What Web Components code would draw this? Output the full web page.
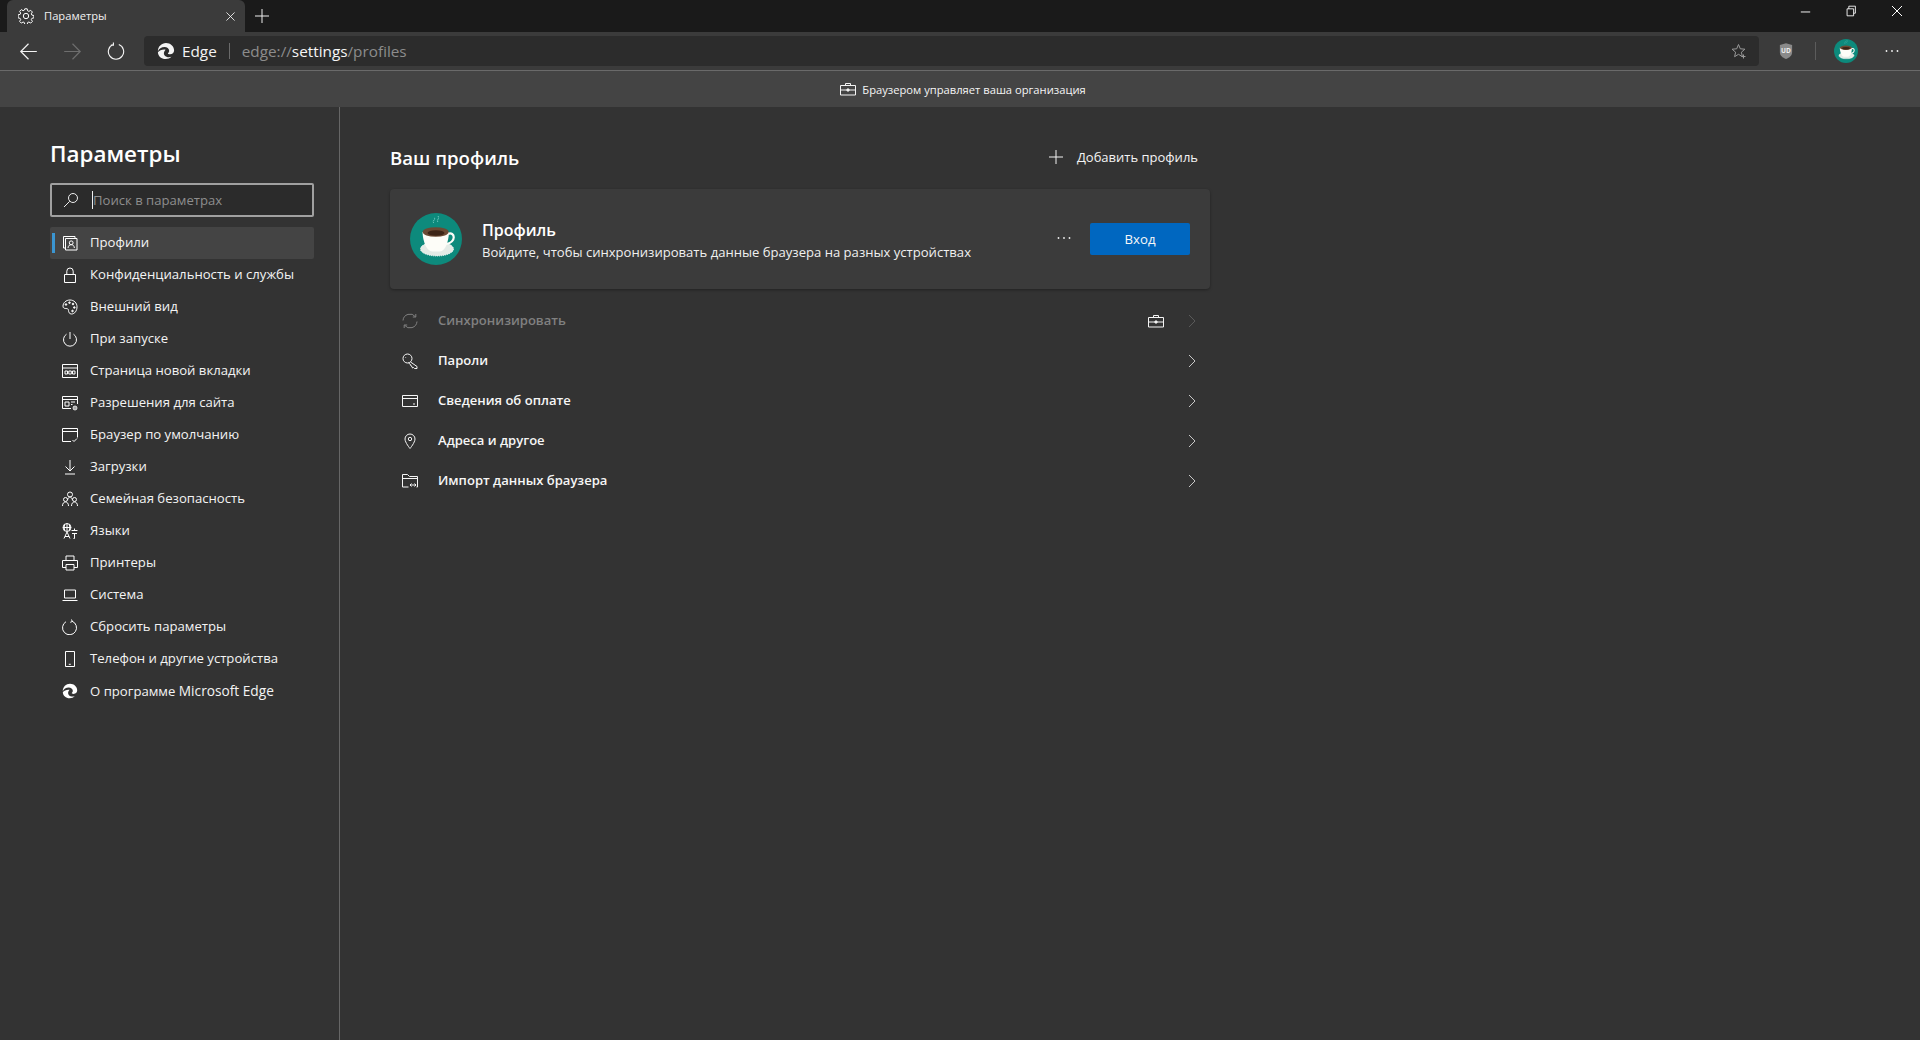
<!DOCTYPE html>
<html lang="ru"><head><meta charset="utf-8"><title>Параметры</title>
<style>
html,body{margin:0;height:100%;background:#333;overflow:hidden}
body{font-family:"Open Sans","Noto Sans","Liberation Sans",sans-serif;color:#f0f0f0;display:flex;flex-direction:column;height:1040px}
.latin{font-size:13.700px}
</style></head><body>
<browser-tabstrip></browser-tabstrip>
<browser-toolbar></browser-toolbar>
<managed-bar>Браузером управляет ваша организация</managed-bar>
<settings-page>
  <settings-sidebar slot="side">
    <nav-item icon="profiles" selected>Профили</nav-item>
    <nav-item icon="lock">Конфиденциальность и службы</nav-item>
    <nav-item icon="palette">Внешний вид</nav-item>
    <nav-item icon="power">При запуске</nav-item>
    <nav-item icon="newtab">Страница новой вкладки</nav-item>
    <nav-item icon="siteperm">Разрешения для сайта</nav-item>
    <nav-item icon="defbrowser">Браузер по умолчанию</nav-item>
    <nav-item icon="download">Загрузки</nav-item>
    <nav-item icon="family">Семейная безопасность</nav-item>
    <nav-item icon="lang">Языки</nav-item>
    <nav-item icon="printer">Принтеры</nav-item>
    <nav-item icon="laptop">Система</nav-item>
    <nav-item icon="reset">Сбросить параметры</nav-item>
    <nav-item icon="phone">Телефон и другие устройства</nav-item>
    <nav-item icon="edge">О программе <span class="latin">Microsoft Edge</span></nav-item>
  </settings-sidebar>
  <profile-main slot="main">
    <profile-row icon="sync" disabled managed>Синхронизировать</profile-row>
    <profile-row icon="key">Пароли</profile-row>
    <profile-row icon="card">Сведения об оплате</profile-row>
    <profile-row icon="pin">Адреса и другое</profile-row>
    <profile-row icon="import">Импорт данных браузера</profile-row>
  </profile-main>
</settings-page>
<script>
const ICONS={
gear:'<circle cx="8" cy="8" r="2.700"/><path d="M6.800 .8h2.400l.4 2 1.300.6 1.800-1.100 1.700 1.700-1.100 1.800.6 1.300 2 .4v2.400l-2 .4-.6 1.300 1.100 1.800-1.700 1.700-1.800-1.100-1.300.6-.4 2H6.800l-.4-2-1.300-.6-1.800 1.100-1.700-1.700 1.100-1.800-.6-1.300-2-.4V6.800l2-.4.6-1.300-1.100-1.800 1.700-1.700 1.800 1.100 1.300-.6z"/>',
x:'<path d="M3 3l10 10M13 3L3 13"/>',
plus:'<path d="M8 1v14M1 8h14"/>',
back:'<path d="M15 8H1.500M8 1.500L1.500 8 8 14.500"/>',
forward:'<path d="M1 8h13.500M8 1.500L14.500 8 8 14.500"/>',
refresh:'<path d="M10.500 2.200A6.800 6.800 0 1 1 5.500 2.200M5.700 .5v2.300H3.400"/>',
star:'<path d="M7.500 1.500l1.800 4.300 4.600.4-3.500 3 1 4.500-3.900-2.400-3.900 2.400 1-4.500-3.500-3 4.600-.4z"/><path d="M12.500 11.500v4M10.500 13.500h4" />',
min:'<path d="M3 8.500h10"/>',
restore:'<path d="M3.500 5.500h7.500v8H3.500zM5.500 5.500V2.500H13v8h-2"/>',
dots:'<circle cx="2.500" cy="8" r=".9" fill="currentColor" stroke="none"/><circle cx="8" cy="8" r=".9" fill="currentColor" stroke="none"/><circle cx="13.500" cy="8" r=".9" fill="currentColor" stroke="none"/>',
brief:'<path d="M.5 4.500h15v9.500H.5zM5.500 4.500V2.500h5v2M.5 9h15"/><path d="M7 8h2v2H7z" fill="currentColor"/>',
search:'<circle cx="10" cy="6" r="4.500"/><path d="M6.700 9.300L1 15"/>',
profiles:'<path d="M3.500 3.500h11.500v11.500H3.500z"/><path d="M3.500 13H1.500V1.500H13v2"/><circle cx="9.200" cy="7.800" r="1.900"/><path d="M6 13c.3-2.400 1.500-3.300 3.200-3.300s2.900.9 3.200 3.300"/>',
lock:'<path d="M2.500 7.500h11v8h-11zM4.800 7.500V4.200a3.200 3.200 0 0 1 6.400 0v3.300"/>',
palette:'<path d="M8 1C4 1 1 3.800 1 7.200c0 1.800 1.300 2.300 2.800 2.300 1.500 0 2.700.3 2.700 2 0 1.500.8 3.500 3 3.500 3.300 0 5.500-3.400 5.500-7.200C15 4 12 1 8 1z"/><circle cx="4" cy="5.500" r=".8" fill="currentColor"/><circle cx="7.500" cy="3.700" r=".8" fill="currentColor"/><circle cx="11" cy="5" r=".8" fill="currentColor"/><circle cx="12.300" cy="8.500" r=".8" fill="currentColor"/><circle cx="10.500" cy="12" r=".8" fill="currentColor"/>',
power:'<path d="M8 1v7M4.500 3.200a6.500 6.500 0 1 0 7 0"/>',
newtab:'<path d="M.5 1.500h15v13H.5zM.5 5h15"/><path d="M3 8h2.500v3H3zM6.800 8h2.500v3H6.800zM10.500 8H13v3h-2.500z"/>',
siteperm:'<path d="M9 13.500H.5v-12h15V9M.5 4.500h15M3 7h4v4H3zM9 7h4M9 9.500h1.500"/><circle cx="13" cy="13" r="1.300"/><path d="M13 10.500v1M13 14.500v1M10.500 13h1M14.500 13h1M11.300 11.300l.7.7M14 14l.7.7M14.700 11.300l-.7.7M12 14l-.7.7"/>',
defbrowser:'<path d="M9 14.500H.5v-13h15v9M.5 4.500h15M10.500 13l1.500 1.500 3-3"/>',
download:'<path d="M8 1v10.500M3.500 7.500L8 12l4.500-4.500M3 15h10"/>',
family:'<circle cx="8" cy="3.500" r="2.500"/><circle cx="3.500" cy="8.500" r="2"/><circle cx="12.500" cy="8.500" r="2"/><path d="M.5 15c0-2.500 1.200-4 3-4s3 1.500 3 4M9.500 15c0-2.500 1.200-4 3-4s3 1.500 3 4M5.500 9c.5-2 1.500-3 2.500-3s2 1 2.500 3"/>',
lang:'<circle cx="5" cy="4.500" r="4"/><path d="M1 4.500h8M5 .5v8M2.800 1.500c-.8 2-.8 4 0 6M7.200 1.500c.8 2 .8 4 0 6M2 15.500l3-6.500 3 6.500M3 13.500h4M9.500 7.500h6M12.500 5.500v2M10 10.500h5M12.500 10.500v5h-1"/>',
printer:'<path d="M4 5.500V1h8v4.500M4 12.500H.5v-7h15v7H12M4 9.500h8V15H4z"/>',
laptop:'<path d="M2.500 3h11v8h-11zM.5 13.500h15"/>',
reset:'<path d="M10 2.200A7 7 0 1 1 4 2.700M9.500 .5l.8 2-2 .8"/>',
phone:'<path d="M3.500 .5h9v15h-9z"/><path d="M6.800 13.300h2" />',
sync:'<path d="M1 7.500a7 7 0 0 1 12.500-3.700M15 8.500a7 7 0 0 1-12.500 3.700M13.800 1v3h-3M2.200 15v-3h3"/>',
key:'<circle cx="5.500" cy="5.500" r="4.500"/><path d="M3.500 4.500h.6M8.500 9l6.500 4.500v2h-2.500l-1-1-1 .5-.5-1.500-1-.5-.5-1.500-2-1.500"/>',
card:'<path d="M.5 2.500h15v11H.5zM.5 5.500h15M11 11h2"/>',
pin:'<path d="M8 15.500S3 9.500 3 6a5 5 0 0 1 10 0c0 3.500-5 9.500-5 9.500z"/><circle cx="8" cy="6" r="1.700"/>',
import:'<path d="M6.500 14H.5V1.500h5l2 2h8V14h-1M8 12h6M9.500 10.500L8 12l1.500 1.500M12.500 10.500L14 12l-1.500 1.500"/><path d="M.5 5.500h15"/>',
chev:'<path d="M5 2l6 6-6 6"/>'
};
const EDGE='<path fill="currentColor" d="M1 10.200C1 5 5 1 10 1c5 0 9 3.500 9 8.500 0 2.500-2 4.200-4.500 4.200-1.500 0-2.700-.5-2.300-1.100.7-.7 1.300-1.500 1.300-2.800 0-2.700-2.500-4.300-5-4.300-3.500 0-6.500 2-7.500 4.700z"/><path fill="currentColor" d="M1 11.500C1.200 16 5 19 9.500 19c2.500 0 5-1 6.500-2.500-2.500 1-6 .5-7.500-1.500-1.500-2-1-4.500 1-6.500-3.500-.5-7 1-8.500 3z"/>';
const CUP=`<svg viewBox="0 0 52 52" width="100%" height="100%" style="display:block"><circle cx="26" cy="26" r="26" fill="#0d8a7c"/><path d="M24 10c-3-2 3-4 0-5M28 9c-2-2 2-3 0-6" fill="none" stroke="#7fd0c8" stroke-width="1" stroke-dasharray="1.500 1"/><ellipse cx="27" cy="36" rx="16.500" ry="7" fill="#e4ebe6"/><ellipse cx="27" cy="36" rx="16.500" ry="7" fill="none" stroke="#fff" stroke-width="1" stroke-dasharray="1 1"/><path d="M12.500 19C13 30 17 38 22 38.500H30C35 38 38.500 30 39 19z" fill="#fdfdf8"/><path d="M38 21c7-3 9 8-2 10" fill="none" stroke="#fdfdf8" stroke-width="2.200"/><ellipse cx="25.700" cy="19" rx="13" ry="4.800" fill="#6b4a34"/><ellipse cx="26" cy="20" rx="8.500" ry="2.800" fill="#3d2517"/></svg>`;
function ic(name,size=16,extra=''){
  return name==='edge'?`<svg viewBox="0 0 20 20" width="${size}" height="${size}" style="display:block;${extra}">${EDGE}</svg>`
  :`<svg viewBox="0 0 16 16" width="${size}" height="${size}" fill="none" stroke="currentColor" stroke-width="1" style="display:block;${extra}">${ICONS[name]}</svg>`;
}
class Base extends HTMLElement{
  render(html){this.attachShadow({mode:'open'}).innerHTML=html;}
}
customElements.define('browser-tabstrip',class extends Base{connectedCallback(){this.render(`<style>
:host{display:flex;height:32px;flex:none;background:#1a1a1a;color:#fff;font-size:11.200px;padding-left:7px}
.tab{width:238px;height:32px;box-sizing:border-box;background:#3b3b3b;border-radius:6px 6px 0 0;display:flex;align-items:center;padding:0 8px 0 11px}
.t{margin-left:10px;flex:1;color:#f0f0f0;padding-bottom:1px}
.plus{margin-left:9px;align-self:center;color:#eee}
.sp{flex:1}
.w{width:46px;height:22px;display:flex;align-items:center;justify-content:center;color:#fff}
</style><div class="tab">${ic('gear',16)}<span class="t">Параметры</span>${ic('x',13)}</div><div class="plus">${ic('plus',16)}</div><div class="sp"></div><div class="w">${ic('min',15)}</div><div class="w">${ic('restore',14)}</div><div class="w">${ic('x',16)}</div>`)}});
customElements.define('browser-toolbar',class extends Base{connectedCallback(){this.render(`<style>
:host{display:flex;height:38px;flex:none;background:#3b3b3b;color:#f4f4f4;padding-left:6px;align-items:flex-start;border-bottom:1px solid #6a6a6a}
.b{width:44px;height:38px;display:flex;align-items:center;justify-content:center}
.dim{color:#6e6e6e}
.addr{flex:1;height:30px;margin:4px 0 0 6px;background:#2c2c2c;border-radius:4px;display:flex;align-items:center;padding:0 12px 0 13px;font-size:15.300px}
.e{margin-left:7px;color:#f4f4f4}
.sep{width:1px;height:16px;background:#6a6a6a;margin:0 12px}
.u{color:#8c8c8c;flex:1}.u b{font-weight:400;color:#f6f6f6}
.star{color:#9a9a9a}
.s{height:38px;display:flex;align-items:center}
.shield{margin-left:17px;width:20px;justify-content:center}
.v{width:1px;height:18px;background:#5c5c5c;margin-left:19px}
.av{width:24px;height:24px;margin:7px 0 0 18px}
.d{width:20px;margin:0 18px 0 24px;justify-content:center}
</style><div class="b">${ic('back',19)}</div><div class="b dim">${ic('forward',19)}</div><div class="b">${ic('refresh',18)}</div>
<div class="addr">${ic('edge',18)}<span class="e">Edge</span><span class="sep"></span><span class="u">edge://<b>settings</b>/profiles</span><span class="star">${ic('star',16)}</span></div>
<div class="s shield"><svg viewBox="0 0 16 20" width="14" height="18"><path d="M8 1l7 2v8c0 4-3 6.500-7 8-4-1.500-7-4-7-8V3z" fill="#8a8a8a"/><text x="8" y="12" text-anchor="middle" font-size="7.500" font-weight="700" font-family="Open Sans" fill="#eee">UD</text></svg></div>
<div class="s"><span class="v"></span></div><div class="av">${CUP}</div><div class="s d">${ic('dots',16)}</div>`)}});
customElements.define('managed-bar',class extends Base{connectedCallback(){this.render(`<style>
:host{display:flex;flex:none;height:36px;box-sizing:border-box;background:#444;color:#f4f4f4;font-size:11.200px;align-items:center;justify-content:center;gap:6px;padding-left:6px}
</style>${ic('brief',16)}<slot></slot>`)}});
customElements.define('settings-page',class extends Base{connectedCallback(){this.render(`<style>
:host{display:flex;flex:1;min-height:0;background:#333}
</style><slot name="side"></slot><slot name="main"></slot>`)}});
customElements.define('settings-sidebar',class extends Base{connectedCallback(){this.render(`<style>
:host{display:block;flex:none;width:340px;box-sizing:border-box;border-right:1px solid #666;padding:32px 25px 0 50px}
h1{margin:0;height:32px;line-height:30px;font-size:22.400px;font-weight:600;color:#fff}
.search{height:34px;box-sizing:border-box;margin:12px 0 10px;border:2px solid #a0a0a0;border-radius:2px;background:#2b2b2b;display:flex;align-items:center;padding-left:11px;color:#eee}
.caret{width:1px;height:18px;background:#eee;margin-left:13px}
.ph{font-size:13.100px;color:#8e8e8e}
nav{display:block}
</style><h1>Параметры</h1><div class="search">${ic('search',16)}<span class="caret"></span><span class="ph">Поиск в параметрах</span></div><nav><slot></slot></nav>`)}});
customElements.define('nav-item',class extends Base{connectedCallback(){const sel=this.hasAttribute('selected');this.render(`<style>
:host{display:flex;height:32px;align-items:center;padding-left:12px;border-radius:2px;position:relative;font-size:13.150px;color:#fff;${sel?'background:#444;':''}}
.bar{position:absolute;left:2px;top:6px;bottom:6px;width:3px;background:#3b96d2}
.t{margin-left:12px;white-space:nowrap;padding-bottom:2px;color:#f4f4f4}
</style>${sel?'<span class="bar"></span>':''}${ic(this.getAttribute('icon'),16)}<span class="t"><slot></slot></span>`)}});
customElements.define('profile-main',class extends Base{connectedCallback(){this.render(`<style>
:host{display:block;width:820px;margin-left:50px;padding-top:32px}
.head{height:38px;display:flex;align-items:center;justify-content:space-between;margin-bottom:12px}
h2{margin:-2px 0 0;font-size:18.600px;font-weight:600;color:#fff}
.add{display:flex;align-items:center;gap:13px;font-size:13px;color:#f4f4f4;margin-right:12px;margin-top:-3px}
.card{height:100px;box-sizing:border-box;background:#3b3b3b;border-radius:4px;box-shadow:0 1px 3px rgba(0,0,0,.35);display:flex;align-items:center;padding:0 20px;margin-bottom:12px}
.av{width:52px;height:52px}
.txt{flex:1;margin-left:20px;padding-top:5px}
.n{font-size:16px;font-weight:600;color:#fff;line-height:21px}
.s{font-size:13.080px;color:#f0f0f0;line-height:23px}
.dots{margin:-2px 18px 0 0;color:#eee}
.btn{width:100px;height:32px;background:#0067c0;border-radius:2px;color:#f8f8f8;font-size:13.200px;display:flex;align-items:center;justify-content:center}
</style><div class="head"><h2>Ваш профиль</h2><div class="add">${ic('plus',16)}<span>Добавить профиль</span></div></div>
<div class="card"><div class="av">${CUP}</div><div class="txt"><div class="n">Профиль</div><div class="s">Войдите, чтобы синхронизировать данные браузера на разных устройствах</div></div><div class="dots">${ic('dots',16)}</div><div class="btn">Вход</div></div>
<slot></slot>`)}});
customElements.define('profile-row',class extends Base{connectedCallback(){const d=this.hasAttribute('disabled');this.render(`<style>
:host{display:flex;height:40px;align-items:center;padding:0 10px 0 12px;font-size:13.050px;font-weight:600;color:${d?'#808080':'#f6f6f6'}}
.t{margin-left:20px;flex:1;padding-bottom:2px}
.b{color:#f4f4f4;margin-right:20px}
.c{color:${d?'#5a5a5a':'#c8c8c8'}}
</style>${ic(this.getAttribute('icon'),16)}<span class="t"><slot></slot></span>${this.hasAttribute('managed')?`<span class="b">${ic('brief',16)}</span>`:''}<span class="c">${ic('chev',16)}</span>`)}});
</script>
</body></html>
